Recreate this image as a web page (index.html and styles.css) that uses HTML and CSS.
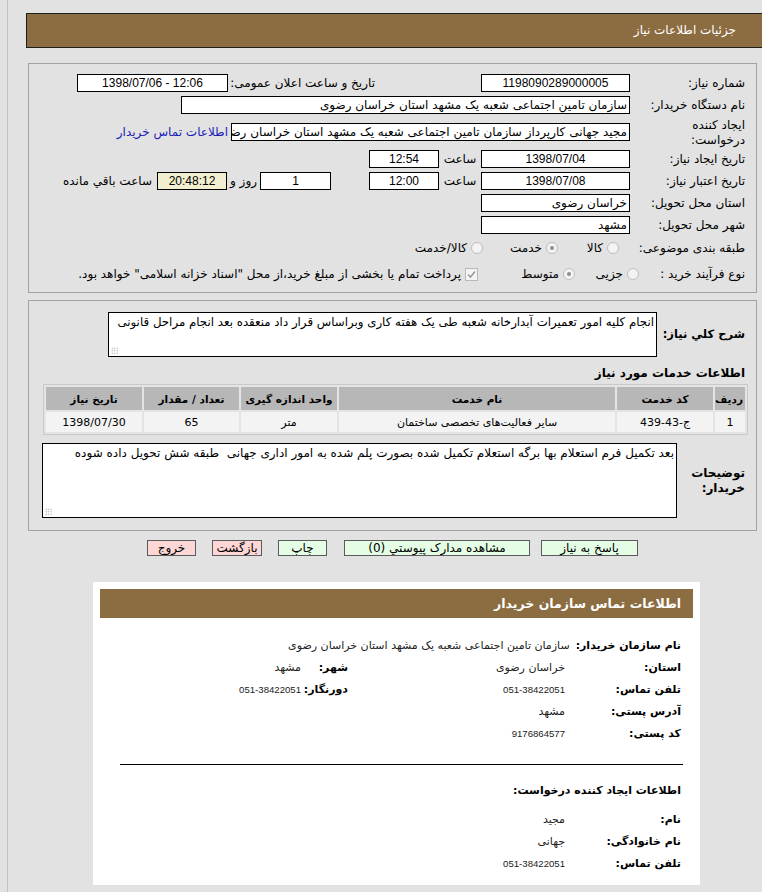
FILE: index.html
```html
<!DOCTYPE html>
<html lang="fa" dir="rtl">
<head>
<meta charset="utf-8">
<title>جزئیات اطلاعات نیاز</title>
<link rel="stylesheet" href="styles.css">
</head>
<body>
<div class="page">
  <div class="page-header">جزئیات اطلاعات نیاز</div>

  <div class="box box-main">
    <div class="row">
      <div class="lbl">شماره نیاز:</div>
      <div class="field w149 center num">1198090289000005</div>
      <div class="lbl-pub">تاریخ و ساعت اعلان عمومی:</div>
      <div class="field w151 center num">1398/07/06 - 12:06</div>
    </div>
    <div class="row">
      <div class="lbl">نام دستگاه خریدار:</div>
      <div class="field w449">سازمان تامین اجتماعی شعبه یک مشهد استان خراسان رضوی</div>
    </div>
    <div class="row row-tall">
      <div class="lbl lbl-2line">ایجاد کننده<br>درخواست:</div>
      <div class="field w399">مجید جهانی کارپرداز سازمان تامین اجتماعی شعبه یک مشهد استان خراسان رضوی</div>
      <a class="buyer-link" href="#">اطلاعات تماس خریدار</a>
    </div>
    <div class="row">
      <div class="lbl">تاریخ ایجاد نیاز:</div>
      <div class="field w149 center num">1398/07/04</div>
      <div class="sep w42">ساعت</div>
      <div class="field w70 center num">12:54</div>
    </div>
    <div class="row">
      <div class="lbl">تاریخ اعتبار نیاز:</div>
      <div class="field w149 center num">1398/07/08</div>
      <div class="sep w42">ساعت</div>
      <div class="field w70 center num">12:00</div>
      <div class="field w71 center num gap38">1</div>
      <div class="sep w33">روز و</div>
      <div class="field w70 center num remain">20:48:12</div>
      <div class="remain-text">ساعت باقي مانده</div>
    </div>
    <div class="row">
      <div class="lbl">استان محل تحویل:</div>
      <div class="field w149">خراسان رضوی</div>
    </div>
    <div class="row">
      <div class="lbl">شهر محل تحویل:</div>
      <div class="field w149">مشهد</div>
    </div>
    <div class="row row-cat">
      <div class="lbl">طبقه بندی موضوعی:</div>
      <div class="opt opt-c1"><span class="radio"></span><span>کالا</span></div>
      <div class="opt opt-c2"><span class="radio on"></span><span>خدمت</span></div>
      <div class="opt opt-c3"><span class="radio"></span><span>کالا/خدمت</span></div>
    </div>
    <div class="row row-proc">
      <div class="lbl lbl-proc">نوع فرآیند خرید :</div>
      <div class="opt opt-p1"><span class="radio"></span><span>جزیی</span></div>
      <div class="opt opt-p2"><span class="radio on"></span><span>متوسط</span></div>
      <div class="opt opt-p3">
        <span class="check"><svg viewBox="0 0 11 11" width="11" height="11"><polyline points="2,5.5 4.5,8 9,2.5" fill="none" stroke="#9a9a9a" stroke-width="1.6"/></svg></span>
        <span>پرداخت تمام یا بخشی از مبلغ خرید،از محل "اسناد خزانه اسلامی" خواهد بود.</span>
      </div>
    </div>
  </div>

  <div class="box box-detail">
    <div class="desc-row">
      <div class="lbl-bold lbl-desc w99">شرح کلي نياز:</div>
      <div class="textbox desc-box">انجام کلیه امور تعمیرات آبدارخانه شعبه طی یک هفته کاری وبراساس قرار داد منعقده بعد انجام مراحل قانونی<span class="grip"></span></div>
    </div>
    <div class="section-title">اطلاعات خدمات مورد نیاز</div>
    <table class="items">
      <thead>
        <tr>
          <th class="c-idx">ردیف</th>
          <th class="c-code">کد خدمت</th>
          <th class="c-name">نام خدمت</th>
          <th class="c-unit">واحد اندازه گیری</th>
          <th class="c-qty">تعداد / مقدار</th>
          <th class="c-date">تاریخ نیاز</th>
        </tr>
      </thead>
      <tbody>
        <tr>
          <td>1</td>
          <td>ج-43-439</td>
          <td>سایر فعالیت‌های تخصصی ساختمان</td>
          <td>متر</td>
          <td>65</td>
          <td>1398/07/30</td>
        </tr>
      </tbody>
    </table>
    <div class="desc-row notes-row">
      <div class="lbl-bold w79">توضیحات<br>خریدار:</div>
      <div class="textbox notes-box">بعد تکمیل فرم استعلام بها برگه استعلام تکمیل شده بصورت پلم شده به امور اداری جهانی&nbsp; طبقه شش تحویل داده شوده<span class="grip"></span></div>
    </div>
  </div>

  <div class="buttons">
    <button class="btn btn-green b-reply">پاسخ به نیاز</button>
    <button class="btn btn-green b-docs">مشاهده مدارک پیوستي (0)</button>
    <button class="btn btn-green b-print">چاپ</button>
    <button class="btn btn-pink b-back">بازگشت</button>
    <button class="btn btn-pink b-exit">خروج</button>
  </div>

  <div class="contact">
    <div class="contact-head">اطلاعات تماس سازمان خریدار</div>
    <div class="crow">
      <div class="clbl cl-org">نام سازمان خریدار:</div>
      <div class="cval">سازمان تامین اجتماعی شعبه یک مشهد استان خراسان رضوی</div>
    </div>
    <div class="crow">
      <div class="clbl">استان:</div>
      <div class="cval cv-1">خراسان رضوی</div>
      <div class="clbl cl-2">شهر:</div>
      <div class="cval">مشهد</div>
    </div>
    <div class="crow">
      <div class="clbl">تلفن تماس:</div>
      <div class="cval cv-1"><span class="cnum">051-38422051</span></div>
      <div class="clbl cl-2">دورنگار:</div>
      <div class="cval"><span class="cnum">051-38422051</span></div>
    </div>
    <div class="crow">
      <div class="clbl">آدرس پستی:</div>
      <div class="cval">مشهد</div>
    </div>
    <div class="crow">
      <div class="clbl">کد پستی:</div>
      <div class="cval"><span class="cnum">9176864577</span></div>
    </div>
    <div class="divider"></div>
    <div class="crow sub-title">اطلاعات ایجاد کننده درخواست:</div>
    <div class="crow creator-first">
      <div class="clbl">نام:</div>
      <div class="cval">مجید</div>
    </div>
    <div class="crow">
      <div class="clbl">نام خانوادگی:</div>
      <div class="cval">جهانی</div>
    </div>
    <div class="crow">
      <div class="clbl">تلفن تماس:</div>
      <div class="cval"><span class="cnum">051-38422051</span></div>
    </div>
  </div>
</div>
</body>
</html>
```

FILE: styles.css
```css
* { box-sizing: border-box; }
html, body { margin: 0; padding: 0; overflow: hidden; }
body {
  background: #e2e2e2;
  font-family: "DejaVu Sans", sans-serif;
  font-size: 12px;
  color: #000;
}
.page {
  margin-left: 7px;
  border-left: 1px solid #c2c2c2;
  min-height: 892px;
  padding-top: 13px;
}
.page-header {
  margin-left: 18px;
  height: 35px;
  background: #8c6c41;
  border: 1px solid #1e1e1e;
  border-right: none;
  color: #fff;
  font-size: 12px;
  line-height: 33px;
  padding-right: 26px;
}
.box {
  margin: 15px 5px 0 20px;
  border: 1px solid #a2a2a2;
}
.box-main { padding: 8px 0 4px; }
.row {
  display: flex;
  align-items: center;
  height: 22px;
}
.row-tall { height: 32px; }
.row-cat { height: 24px; }
.row-proc { height: 28px; }
.lbl {
  flex: none;
  width: 126px;
  padding-right: 11px;
  white-space: nowrap;
}
.lbl-2line { line-height: 15px; padding-top: 2px; }
.lbl-proc { width: 117px; }
.lbl-pub {
  flex: none;
  width: 253px;
  padding-right: 106px;
  white-space: nowrap;
}
.field {
  flex: none;
  height: 18px;
  border: 1px solid #000;
  background: #fff;
  line-height: 16px;
  padding: 0 2px;
  white-space: nowrap;
  overflow: hidden;
}
.center { text-align: center; }
.num {
  font-family: "Liberation Sans", sans-serif;
  direction: ltr;
}
.w149 { width: 149px; }
.w151 { width: 151px; }
.w449 { width: 449px; }
.w399 { width: 399px; }
.w70 { width: 70px; }
.w71 { width: 71px; }
.w42 { width: 42px; }
.w33 { width: 33px; }
.gap38 { margin-right: 38px; }
.sep { flex: none; text-align: center; white-space: nowrap; }
.remain { background: #f1efcf; }
.remain-text { padding-right: 5px; white-space: nowrap; }
.buyer-link {
  margin-right: 3px;
  color: #2020b8;
  text-decoration: none;
  white-space: nowrap;
}
.opt {
  flex: none;
  display: flex;
  align-items: center;
  white-space: nowrap;
}
.opt .radio, .opt .check { margin-left: 4px; }
.opt-c1 { width: 70px; padding-right: 11px; }
.opt-c2 { width: 75px; padding-right: 2px; }
.opt-c3 { padding-right: 2px; }
.opt-p1 { width: 62px; padding-right: 0; }
.opt-p2 { width: 97px; padding-right: 2px; }
.opt-p3 { padding-right: 2px; }
.radio {
  flex: none;
  position: relative;
  width: 12px;
  height: 12px;
  border-radius: 50%;
  border: 1px solid #bdbdbd;
  background: #f3f3f3;
}
.radio.on::after {
  content: "";
  position: absolute;
  left: 3px;
  top: 3px;
  width: 4px;
  height: 4px;
  border-radius: 50%;
  background: #8d8d8d;
}
.check {
  flex: none;
  display: flex;
  align-items: center;
  justify-content: center;
  width: 13px;
  height: 13px;
  border: 1px solid #b8b8b8;
  background: #f4f4f4;
}

.box-detail { margin-top: 7px; padding: 11px 0 12px; }
.desc-row { display: flex; align-items: center; }
.lbl-bold {
  flex: none;
  font-weight: bold;
  font-size: 12px;
  padding-right: 11px;
  line-height: 15px;
}
.lbl-desc { font-size: 11.5px; }
.w99 { width: 99px; }
.w79 { width: 79px; }
.textbox {
  position: relative;
  flex: none;
  border: 1px solid #000;
  background: #fff;
  font-size: 12px;
  line-height: 16px;
  padding: 1px 3px;
}
.desc-box { width: 549px; height: 45px; font-size: 11.8px; padding-right: 2px; }
.notes-box { width: 635px; height: 75px; padding-right: 2px; }
.grip {
  position: absolute;
  left: 2px;
  bottom: 2px;
  width: 7px;
  height: 7px;
  background: radial-gradient(circle, #b0b0b0 0.7px, transparent 0.9px) 0 0 / 2.5px 2.5px;
}
.section-title {
  font-weight: bold;
  font-size: 12px;
  padding-right: 11px;
  margin-top: 8px;
  line-height: 16px;
}
.items {
  margin: 3px 8px 0 14px;
  width: 705px;
  border: 1px solid #c9c9c9;
  border-spacing: 2px;
  background: #e4e4e4;
  table-layout: fixed;
  font-size: 11px;
}
.items th {
  background: #b7b7b7;
  font-weight: bold;
  font-size: 10.5px;
  height: 23px;
  padding: 0;
  text-align: center;
}
.items td {
  background: #f3f3f3;
  height: 20px;
  padding: 0;
  text-align: center;
}
.items th.c-idx { width: 30px; text-align: right; padding-right: 2px; }
.items th.c-code { width: 96px; }
.items th.c-unit { width: 96px; }
.items th.c-qty { width: 95px; }
.items th.c-date { width: 96px; }
.notes-row { margin-top: 8px; }

.buttons {
  margin: 9px 5px 0 20px;
  display: flex;
  justify-content: center;
}
.btn {
  height: 16px;
  padding: 0;
  border: 1px solid #5a5a5a;
  font-family: "DejaVu Sans", sans-serif;
  font-size: 12px;
  line-height: 14px;
  color: #000;
  border-radius: 0;
}
.btn-green { background: #e4fde4; }
.btn-pink { background: #fdd6d6; }
.b-reply { width: 97px; margin-left: 11px; }
.b-docs { width: 186px; margin-left: 17px; }
.b-print { width: 49px; margin-left: 16px; }
.b-back { width: 50px; margin-left: 16px; }
.b-exit { width: 49px; }

.contact {
  margin: 26px 62px 0 85px;
  background: #fff;
  padding: 7px 7px 11px 7px;
}
.contact-head {
  height: 29px;
  background: #8c6c41;
  color: #fff;
  font-weight: bold;
  font-size: 12.5px;
  line-height: 29px;
  padding-right: 12px;
}
.crow {
  display: flex;
  align-items: center;
  height: 22px;
  padding-right: 12px;
  font-size: 11px;
}
.contact-head + .crow { margin-top: 16px; }
.clbl {
  flex: none;
  width: 116px;
  font-weight: bold;
  white-space: nowrap;
}
.cl-org { width: auto; padding-left: 6px; }
.cl-2 { width: 47px; }
.cval {
  flex: none;
  white-space: nowrap;
  color: #222;
  font-size: 11px;
  text-align: right;
}
.cnum {
  font-family: "Liberation Sans", sans-serif;
  font-size: 9.6px;
  direction: ltr;
  unicode-bidi: isolate;
}
.cv-1 { width: 217px; }
.divider {
  height: 1px;
  background: #000;
  margin: 20px 10px 0 20px;
}
.sub-title { font-weight: bold; margin-top: 14px; }
.creator-first { margin-top: 7px; }
```
